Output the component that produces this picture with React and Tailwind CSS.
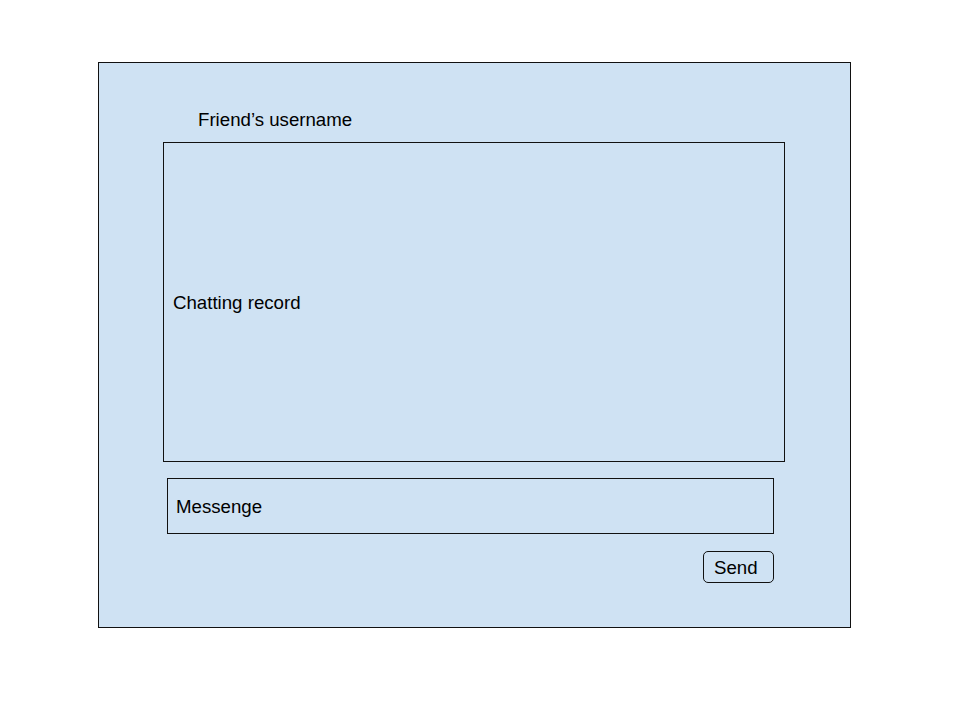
import React from 'react';

const font = { fontFamily: '"Liberation Sans", Arial, sans-serif' };

export default function App() {
  return (
    <div className="w-[960px] h-[720px] bg-white overflow-hidden" style={font}>
      {/* Chat window */}
      <div className="ml-[98px] mt-[62px] w-[753px] h-[566px] border border-[#111] bg-[#cfe2f3] flex flex-col text-[18.67px] leading-[21px] text-black">
        <div className="mt-[46px] ml-[99px]">Friend’s username</div>

        <div className="mt-[12px] ml-[64px] w-[622px] h-[320px] border border-[#111] flex items-center pl-[9px]">
          Chatting record
        </div>

        <div className="mt-[16px] ml-[68px] w-[607px] h-[56px] border border-[#111] flex items-center pl-[8px] pt-[1px]">
          Messenge
        </div>

        <button className="mt-[17px] ml-[604px] w-[71px] h-[32px] border border-[#111] rounded-[5px] flex items-center pl-[10px]">
          Send
        </button>
      </div>
    </div>
  );
}
